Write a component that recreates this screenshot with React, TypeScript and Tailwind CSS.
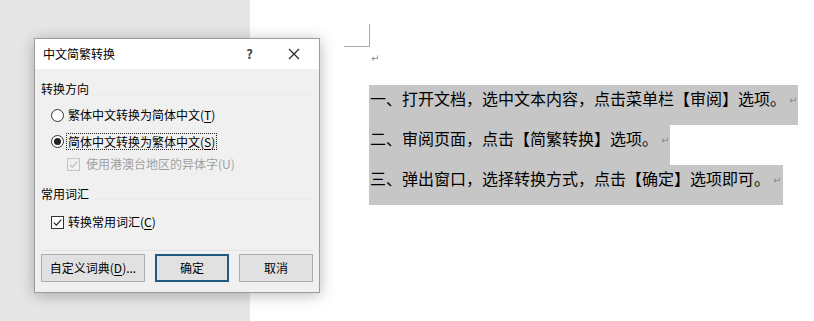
import type { ReactNode } from "react";

const UI_FONT = "font-['Noto_Sans_CJK_SC','Noto_Sans',sans-serif]";

function ReturnMark() {
  return (
    <span className="ml-[3px] inline-block align-middle font-['DejaVu_Sans',sans-serif] text-[10px] leading-none text-[#8c8c8c]">
      ↵
    </span>
  );
}

function Radio({ checked }: { checked?: boolean }) {
  return (
    <span className="flex h-[13px] w-[13px] shrink-0 items-center justify-center rounded-full border border-[#333] bg-white">
      {checked ? <span className="h-[7px] w-[7px] rounded-full bg-[#222]" /> : null}
    </span>
  );
}

function Check({ disabled }: { disabled?: boolean }) {
  return (
    <span
      className={`flex h-[13px] w-[13px] shrink-0 items-center justify-center border ${
        disabled ? "border-[#c4c4c4] bg-[#f0f0f0]" : "border-[#333] bg-white"
      }`}
    >
      <svg viewBox="0 0 11 11" className="h-[11px] w-[11px]">
        <path
          d="M1.8 5.6 L4.3 8.1 L9.3 2.6"
          fill="none"
          stroke={disabled ? "#bdbdbd" : "#222"}
          strokeWidth="1.2"
        />
      </svg>
    </span>
  );
}

function GroupHeader({ children }: { children: ReactNode }) {
  return (
    <div className="flex h-[20px] items-center">
      <span>{children}</span>
      <span className="ml-[4px] mt-[10px] h-px flex-1 bg-[#ebebeb]" />
    </div>
  );
}

function Button({
  children,
  primary,
  className,
}: {
  children: ReactNode;
  primary?: boolean;
  className: string;
}) {
  return (
    <button
      type="button"
      className={`flex h-[28px] items-center justify-center bg-[#e1e1e1] text-[12px] text-black ${
        primary ? "border-2 border-[#24597f]" : "border border-[#adadad]"
      } ${className}`}
    >
      {children}
    </button>
  );
}

function ConvertDialog() {
  return (
    <div
      className={`absolute left-[34px] top-[38px] flex h-[255px] w-[286px] flex-col border border-[#9c9c9c] bg-[#f0f0f0] text-[12px] text-black shadow-[0_2px_14px_rgba(0,0,0,0.28)] ${UI_FONT}`}
    >
      <div className="flex h-[30px] shrink-0 items-center bg-white pl-[8px]">
        <span className="flex-1">中文简繁转换</span>
        <span className="mr-[35px] text-[13px] font-bold text-[#444]">?</span>
        <svg viewBox="0 0 12 12" className="mr-[19px] h-[12px] w-[12px]">
          <path d="M1 1 L11 11 M11 1 L1 11" stroke="#222" strokeWidth="1.1" />
        </svg>
      </div>

      <div className="flex flex-1 flex-col px-[6px]">
        <div className="mt-[10px]">
          <GroupHeader>转换方向</GroupHeader>
        </div>

        <div className="mt-[3px] flex h-[26px] items-center pl-[10px]">
          <Radio />
          <span className="ml-[4px]">
            繁体中文转换为简体中文(<span className="underline underline-offset-2">T</span>)
          </span>
        </div>

        <div className="flex h-[26px] items-center pl-[10px]">
          <Radio checked />
          <span className="ml-[2px] border border-dotted border-[#222] px-[1px] leading-[15px]">
            简体中文转换为繁体中文(<span className="underline underline-offset-2">S</span>)
          </span>
        </div>

        <div className="flex h-[20px] items-center pl-[26px] text-[#a0a0a0]">
          <Check disabled />
          <span className="ml-[6px]">使用港澳台地区的异体字(U)</span>
        </div>

        <div className="mt-[10px]">
          <GroupHeader>常用词汇</GroupHeader>
        </div>

        <div className="mt-[8px] flex h-[20px] items-center pl-[10px]">
          <Check />
          <span className="ml-[4px]">
            转换常用词汇(<span className="underline underline-offset-2">C</span>)
          </span>
        </div>

        <div className="mt-[18px] h-px bg-[#e4e4e4]" />

        <div className="mt-[3px] flex gap-[10px]">
          <Button className="w-[104px]">
            自定义词典(<span className="underline underline-offset-2">D</span>)...
          </Button>
          <Button primary className="w-[74px]">
            确定
          </Button>
          <Button className="w-[74px]">取消</Button>
        </div>
      </div>
    </div>
  );
}

const LINES = [
  { text: "一、打开文档，选中文本内容，点击菜单栏【审阅】选项。", width: "w-[429px]" },
  { text: "二、审阅页面，点击【简繁转换】选项。", width: "w-[301px]" },
  { text: "三、弹出窗口，选择转换方式，点击【确定】选项即可。", width: "w-[414px]" },
];

export default function App() {
  return (
    <div className="relative flex h-[321px] w-[814px] overflow-hidden bg-white">
      <div className="h-full w-[250px] shrink-0 bg-[#e6e6e6]" />

      <div className="flex flex-1 flex-col bg-white pl-[94px]">
        <div className="mt-[24px] h-[23px] w-[26px] border-b border-r border-[#a8a8a8]" />
        <div className="ml-[24px] mt-[3px] h-[20px] leading-[14px]">
          <ReturnMark />
        </div>

        <div
          className={`ml-[25px] mt-[15px] flex flex-col text-[16px] text-black ${UI_FONT}`}
        >
          {LINES.map((line) => (
            <div key={line.text} className={`h-[40px] bg-[#c6c6c6] pl-[1px] ${line.width}`}>
              <p className="whitespace-nowrap leading-[26px]">
                {line.text}
                <ReturnMark />
              </p>
            </div>
          ))}
        </div>
      </div>

      <ConvertDialog />
    </div>
  );
}
